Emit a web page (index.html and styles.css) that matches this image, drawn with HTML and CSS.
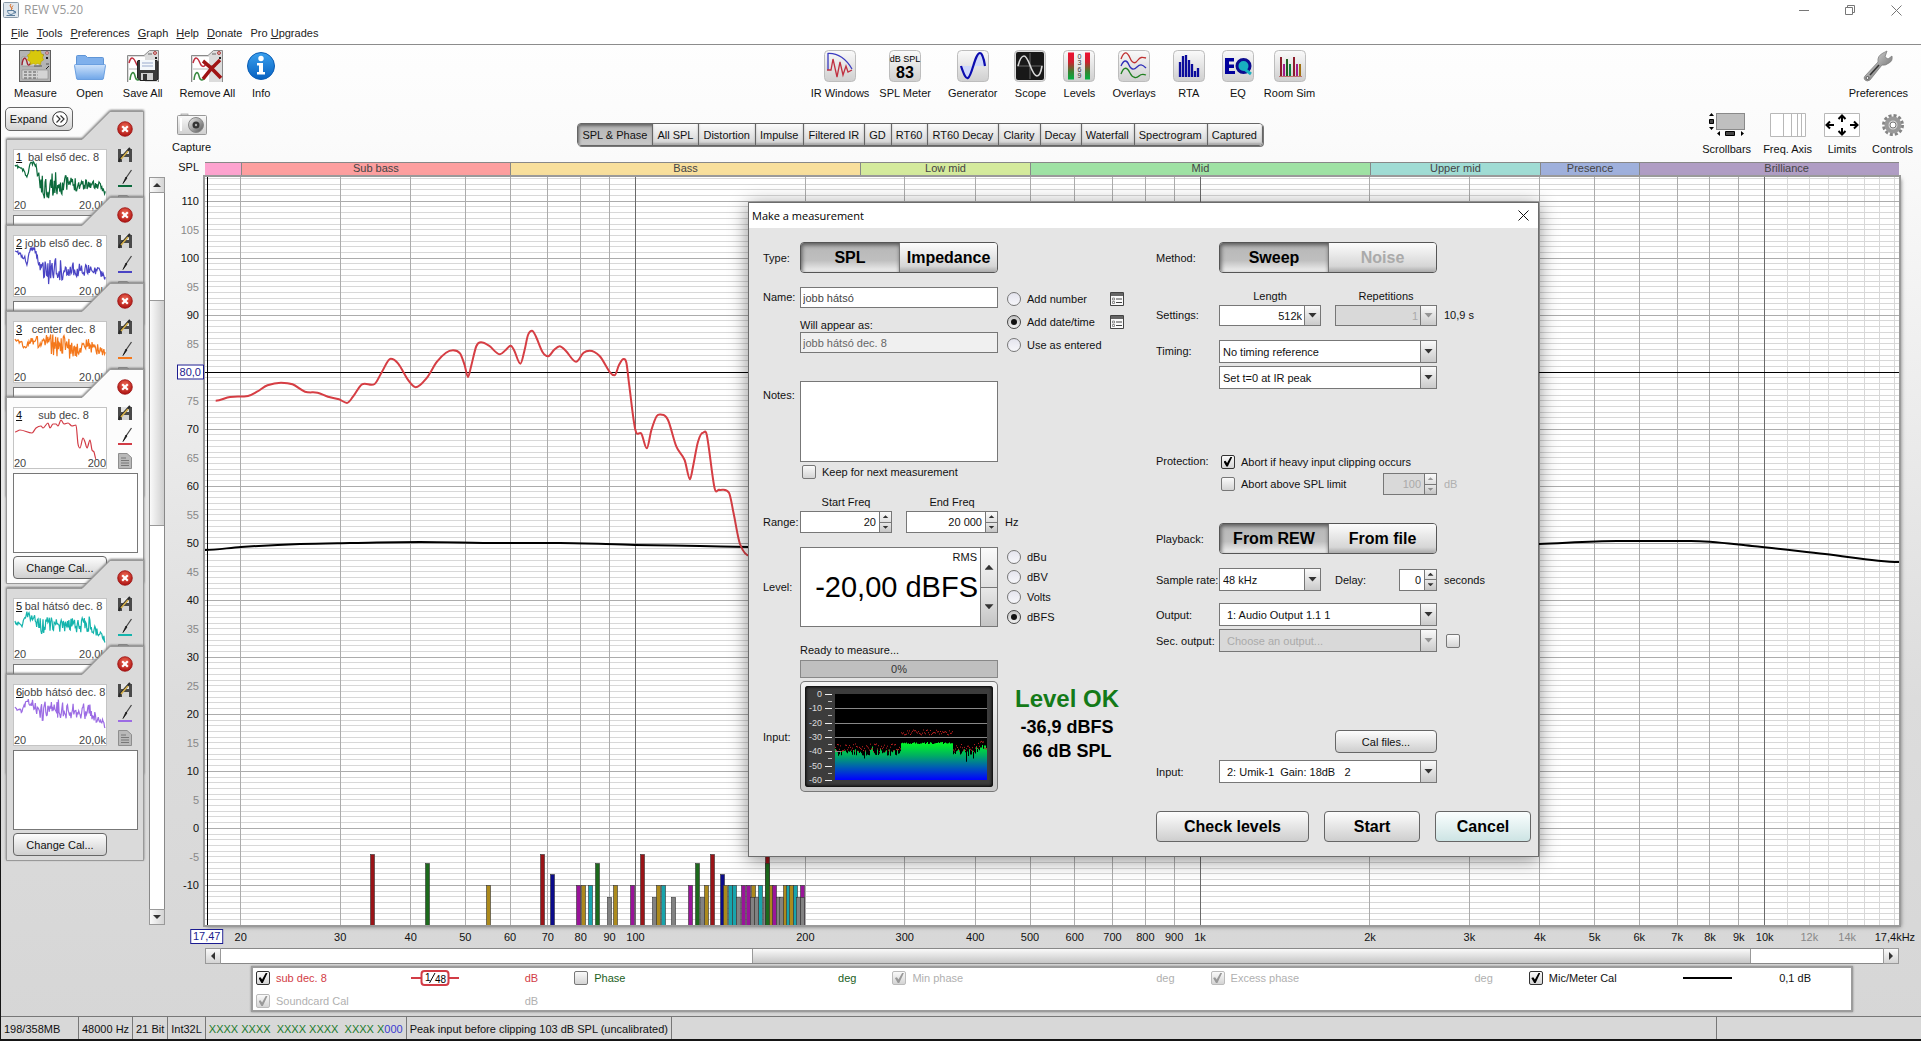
FILE: index.html
```html
<!DOCTYPE html>
<html lang="en">
<head>
<meta charset="utf-8">
<title>REW V5.20</title>
<meta name="viewport" content="width=device-width, initial-scale=1">
<link rel="stylesheet" href="styles.css">
</head>
<body>
<svg class="defs" aria-hidden="true">
  <defs>
    <linearGradient id="g-btn" x1="0" y1="0" x2="0" y2="1"><stop offset="0" stop-color="#fafafa"/><stop offset="1" stop-color="#cfcfcf"/></linearGradient>
    <linearGradient id="g-folder" x1="0" y1="0" x2="0" y2="1"><stop offset="0" stop-color="#cfe3fb"/><stop offset="1" stop-color="#6fa6e8"/></linearGradient>
    <linearGradient id="g-info" x1="0" y1="0" x2="0" y2="1"><stop offset="0" stop-color="#3aa0ee"/><stop offset="1" stop-color="#0660c0"/></linearGradient>
    <linearGradient id="g-level" x1="0" y1="0" x2="0" y2="1"><stop offset="0" stop-color="#ee1030"/><stop offset=".35" stop-color="#d02030"/><stop offset=".7" stop-color="#3c8030"/><stop offset="1" stop-color="#00b040"/></linearGradient>
    <linearGradient id="g-steel" x1="0" y1="0" x2="1" y2="1"><stop offset="0" stop-color="#eee"/><stop offset="1" stop-color="#555"/></linearGradient>
    <radialGradient id="g-red" cx=".5" cy=".35" r=".7"><stop offset="0" stop-color="#ee6a55"/><stop offset="1" stop-color="#a80c0c"/></radialGradient>
    <linearGradient id="g-spec" x1="0" y1="0" x2="0" y2="1"><stop offset="0" stop-color="#00ff20"/><stop offset=".35" stop-color="#00b060"/><stop offset=".65" stop-color="#0060b0"/><stop offset="1" stop-color="#0000ff"/></linearGradient>
    <symbol id="i-card" viewBox="0 0 32 32">
      <path d="M.5 32V5.500H17L22.500.5H31.500V32" fill="#dcdcdc" stroke="#8a8a8a"/>
      <rect x="2" y="7" width="16" height="11" fill="#fff"/><rect x="2" y="20" width="16" height="12" fill="#fff"/>
      <path d="M2 13C4 5 7 8 9 13s5 4 6 0" fill="none" stroke="#c03040" stroke-width="1.500"/>
      <path d="M3 30c1-9 4-9 5-4s4 5 5 2" fill="none" stroke="#3a8a40" stroke-width="1.500"/>
      <path d="M21 4h4M26 12h3M20 16h5" stroke="#666"/><circle cx="28" cy="3" r="1.500" fill="#e9b0b0" stroke="#a44"/><path d="M28 7l2 2m0-2l-2 2" stroke="#222"/>
    </symbol>
    <symbol id="i-measure" viewBox="0 0 32 32">
      <rect x=".5" y=".5" width="31" height="31" fill="#b4b4b4" stroke="#5d5d5d"/>
      <path d="M3 7h18v9H3zM3 20h26v9H3z" fill="#d4d4d4" stroke="#888" stroke-width=".6"/>
      <path d="M3 15c1-9 4-8 5-3s3 3 4 0" fill="none" stroke="#a02030" stroke-width="1.300"/>
      <path d="M5 22h14M5 25h14M5 28h14" stroke="#555" stroke-dasharray="3 1.500"/><path d="M15 16h8M22 5h3M27 14h3" stroke="#555"/>
      <circle cx="28" cy="3" r="1.500" fill="#eaa" stroke="#844" stroke-width=".6"/><path d="M27 7l2 2m0-2l-2 2M27 19l3-3" stroke="#222"/>
      <path d="M16.500 0l2 1.500 3-1 .5 3 2.500 1.500-1 2.500 1 2.500-2.500 1.500-.5 3-3-1-2 1-2-1-3 1-.5-3-2.500-1.500 1-2.500-1-2.500 2.500-1.500.5-3 3 1z" fill="#d8c80c" stroke="#b8a400" stroke-width=".6"/>
    </symbol>
    <symbol id="i-open" viewBox="0 0 32 32">
      <path d="M2.500 15V6.500q0-1 1-1h8l2 2h15q1 0 1 1V15z" fill="#7fb0ec" stroke="#5f95d6"/>
      <path d="M.5 15.500q0-1 1-1h29q1 0 1 1L29.500 28q0 1.500-1.500 1.500H4q-1.500 0-1.500-1.500z" fill="url(#g-folder)" stroke="#6a9fe0"/>
    </symbol>
    <symbol id="i-saveall" viewBox="0 0 32 32">
      <use href="#i-card"/>
      <path d="M11 10.500h19l1 1V29l-1.500 1.500H13L10.500 28V11z" fill="#3a3a3a" stroke="#222"/>
      <rect x="13" y="10" width="15" height="10" fill="#f4f8fb"/><path d="M15 13h11M15 16h11" stroke="#9ac" />
      <rect x="14" y="23" width="12" height="7" fill="#cfcfcf"/><rect x="16" y="24" width="4" height="6" fill="#333"/>
    </symbol>
    <symbol id="i-removeall" viewBox="0 0 32 32">
      <use href="#i-card"/>
      <path d="M12 11q9 7 18 17M29 10Q20 18 12 29" fill="none" stroke="#a01414" stroke-width="3.500"/>
    </symbol>
    <symbol id="i-info" viewBox="0 0 32 32">
      <circle cx="16" cy="16" r="13.500" fill="url(#g-info)" stroke="#0a5cb4"/>
      <circle cx="16" cy="8.500" r="2.700" fill="#fff"/><path d="M12 13h6v9h2v2.500h-8V22h2v-6.500h-2z" fill="#fff"/>
    </symbol>
    <symbol id="i-frame" viewBox="0 0 32 32"><rect x=".5" y=".5" width="31" height="31" rx="4" fill="url(#g-btn)" stroke="#bdbdbd"/></symbol>
    <symbol id="i-ir" viewBox="0 0 32 32"><use href="#i-frame"/>
      <path d="M4 20V3.500C14 3 22 9 28 19" fill="none" stroke="#3a3ac0" stroke-width="1.300"/>
      <path d="M3 20h4L9 9l4 18 3-15 3 13 3-9 2 6 4-2" fill="none" stroke="#c03040" stroke-width="1.300"/></symbol>
    <symbol id="i-gen" viewBox="0 0 32 32"><use href="#i-frame"/>
      <path d="M4 16h14V16C15 25 12 29 10 28S6 22 4 16zM16 16q6-14 8-12t4 12z" fill="#cfd8fa"/>
      <path d="M4 16c3 9 5 13 7 12 4-2 7-25 12-25 2 0 4 6 5 13" fill="none" stroke="#0c0cae" stroke-width="2.200"/></symbol>
    <symbol id="i-scope" viewBox="0 0 32 32"><rect x=".5" y=".5" width="31" height="31" rx="4" fill="#ddd" stroke="#bdbdbd"/>
      <rect x="2" y="2" width="28" height="28" rx="2" fill="#181818"/><path d="M16 3v26M3 16h26" stroke="#666"/>
      <path d="M4 16C6 8 8 6 10 6c5 0 7 19 13 20 2 0 4-4 5-10" fill="none" stroke="#d8d8d8" stroke-width="1.600"/></symbol>
    <symbol id="i-levels" viewBox="0 0 32 32"><use href="#i-frame"/>
      <rect x="5" y="2.500" width="6" height="27" fill="url(#g-level)"/><rect x="22" y="2.500" width="5" height="27" fill="url(#g-level)"/>
      <g font-family="Liberation Sans" font-size="7" text-anchor="middle" fill="#333"><text x="16.500" y="9">0</text><text x="16.500" y="15">3</text><text x="16.500" y="22">6</text><text x="16.500" y="28">9</text></g></symbol>
    <symbol id="i-overlays" viewBox="0 0 32 32"><use href="#i-frame"/>
      <g fill="none" stroke-width="1.300"><path d="M3 9c3-8 6-8 9-1s6 5 8 2 4-3 8-2" stroke="#c03030"/><path d="M3 16c3-7 6-6 8-1s5 5 8 2 5-3 9 1" stroke="#3030b8"/><path d="M3 24c3-8 6-7 9-1s7 5 9 3 4-2 7-1" stroke="#208020"/></g></symbol>
    <symbol id="i-rta" viewBox="0 0 32 32"><use href="#i-frame"/>
      <path d="M7 27V12M10 27V6M13 27V5M16 27V10M19 27V14M22 27V21M25 27V18" stroke="#0c0c9c" stroke-width="2.300"/></symbol>
    <symbol id="i-eq" viewBox="0 0 32 32"><use href="#i-frame"/>
      <path d="M3 8h9v3.500H7v3h5v3.500H7v3h6V24H3z" fill="#00009c"/><circle cx="21.500" cy="16" r="6.500" fill="#18b0c0" stroke="#0c0c90" stroke-width="3"/><path d="M21 18l8 6" stroke="#18b0c0" stroke-width="3"/></symbol>
    <symbol id="i-room" viewBox="0 0 32 32"><use href="#i-frame"/>
      <g stroke-width="2"><path d="M7 26V7M20 26V7" stroke="#8c1c2c"/><path d="M10 26V14M23 26V14" stroke="#a01c8c"/><path d="M13 26V9" stroke="#206020"/><path d="M16 26V14" stroke="#0c8040"/><path d="M26 26V14" stroke="#a07010"/></g><path d="M5 26.500h23" stroke="#c07070"/></symbol>
    <symbol id="i-wrench" viewBox="0 0 32 32">
      <path d="M3 26L16 12q-1-6 5-9 4-2 4-2l-2 6 3 2 4-3q1 5-3 7-4 3-7 2L8 30q-3 2-5 0t0-4z" fill="url(#g-steel)" stroke="#777" stroke-width=".7"/><circle cx="5.500" cy="28" r="1.500" fill="#eee" stroke="#555"/><path d="M8 25l9-10" stroke="#333" stroke-width="1.500"/></symbol>
    <symbol id="i-camera" viewBox="0 0 32 24">
      <rect x="5" y="1" width="7" height="4" fill="#ddd" stroke="#999" stroke-width=".7"/><rect x="1.500" y="2.500" width="29" height="19" rx="1" fill="url(#g-btn)" stroke="#999"/>
      <circle cx="20" cy="12" r="7.500" fill="url(#g-steel)" stroke="#888"/><circle cx="20" cy="12" r="3.500" fill="#333"/><circle cx="20" cy="12" r="1.200" fill="#aaa"/><path d="M5 5v13" stroke="#fff" stroke-width="2"/></symbol>
    <symbol id="i-scrollbars" viewBox="0 0 36 24"><rect x="7.500" y=".5" width="28" height="16" fill="#bfbfbf" stroke="#8a8a8a"/>
      <path d="M0 3l2.500-3L5 3zM0 14l2.500 3L5 14zM11 18v5l-3-2.500zM32 18v5l3-2.500z"/><path d="M.5 6.500h4v4h-4zM16.500 18.500h9v4h-9z" fill="#444" stroke="#000"/></symbol>
    <symbol id="i-freq" viewBox="0 0 36 24"><path d="M.5.5h35v23H.5zM13.500 1v22M21.500 1v22M27.500 1v22M31.500 1v22" fill="#fff" stroke="#b8b8b8"/></symbol>
    <symbol id="i-limits" viewBox="0 0 36 24"><path d="M.5.5h35v23H.5z" fill="#fff" stroke="#b8b8b8"/>
      <path d="M10 12H3m3-3.500L2.500 12 6 15.500M26 12h7m-3-3.500l3.500 3.500-3.500 3.500M18 9V3m-3.500 3L18 2.500 21.500 6M18 15v6m-3.500-3l3.500 3.500 3.500-3.500" fill="none" stroke="#000" stroke-width="2"/></symbol>
    <symbol id="i-gear" viewBox="0 0 36 24"><circle cx="18" cy="12" r="9.500" fill="none" stroke="#858585" stroke-width="3" stroke-dasharray="3 2"/><circle cx="18" cy="12" r="6.500" fill="#d4d4d4" stroke="#999" stroke-width="4"/><circle cx="18" cy="12" r="3" fill="#fff" stroke="#777"/></symbol>
    <symbol id="i-close" viewBox="0 0 16 16"><circle cx="8" cy="8" r="7.300" fill="url(#g-red)" stroke="#9c1010" stroke-width=".8"/><path d="M5.200 5.200l5.600 5.600M10.800 5.200l-5.600 5.600" stroke="#fff" stroke-width="2.200"/></symbol>
    <symbol id="i-save" viewBox="0 0 16 16"><path d="M1 2h14v13H1z" fill="#4a4a4a"/><path d="M4 2h8v5H4z" fill="#e4e4e4"/><path d="M5 10h7v5H5z" fill="#d4d4d4"/><path d="M13 1L3 12l-1 3" fill="none" stroke="#2a2a2a" stroke-width="2"/><path d="M11 4L4 12" stroke="#d8b24a" stroke-width="1.500"/></symbol>
    <symbol id="i-brush" viewBox="0 0 16 20"><path d="M14.500 1L9 9" stroke="#444" stroke-width="1.300"/><path d="M9 8l1 1-4 5.500z" fill="#111" stroke="#111" stroke-width=".8"/></symbol>
    <symbol id="i-note" viewBox="0 0 14 16"><path d="M.5.500h8.500l4.500 4v11H.5z" fill="#b9b9b9" stroke="#8e8e8e"/><path d="M3 5h5M3 7.500h8M3 10h8M3 12.500h8" stroke="#777"/></symbol>
    <symbol id="i-list" viewBox="0 0 14 14"><path d="M.5.5h13v13H.5z" fill="#fafafa" stroke="#444"/><path d="M1 1h12v3H1z" fill="#666"/><path d="M6 7h6M6 10.500h6" stroke="#444"/><path d="M2.500 6h2v2h-2zM2.500 9.500h2v2h-2z" fill="none" stroke="#777" stroke-width=".8"/></symbol>
    <symbol id="i-java" viewBox="0 0 16 16"><rect x=".5" y=".5" width="15" height="15" rx="1" fill="#dfe7ee" stroke="#8a9aa8"/><path d="M8 2q-2 2 0 3.500T8 8M10 3.500Q8 5 9 7" fill="none" stroke="#d8702c"/><path d="M4.500 8.500h6.500v2q-1 2-3 2t-3-2zM11 9.500h1.500v1.500H11M3.500 13.500h8.500" fill="none" stroke="#5a7d9c"/></symbol>
  </defs>
</svg>

<div class="app">
  <header class="titlebar">
    <svg class="java" width="16" height="16"><use href="#i-java"/></svg>
    <span class="titlebar-text">REW V5.20</span>
    <div class="win-buttons">
      <button type="button" aria-label="Minimise"><svg width="11" height="11"><path d="M0 5.500h10" stroke="#777"/></svg></button>
      <button type="button" aria-label="Restore"><svg width="11" height="11"><path d="M.5 2.500h7v7h-7zM2.500 2V.5h7v7H8" fill="none" stroke="#777"/></svg></button>
      <button type="button" aria-label="Close"><svg width="11" height="11"><path d="M.5.5l10 10M10.500.5l-10 10" stroke="#777"/></svg></button>
    </div>
  </header>
  <nav class="menubar">
    <a href="#file"><u>F</u>ile</a><a href="#tools"><u>T</u>ools</a><a href="#preferences"><u>P</u>references</a><a href="#graph"><u>G</u>raph</a><a href="#help"><u>H</u>elp</a><a href="#donate"><u>D</u>onate</a><a href="#pro">Pro <u>U</u>pgrades</a>
  </nav>

  <div class="toolbar">
    <div class="tool-group">
      <button class="tool" type="button"><svg width="32" height="32"><use href="#i-measure"/></svg>Measure</button>
      <button class="tool" type="button"><svg width="32" height="32"><use href="#i-open"/></svg>Open</button>
      <button class="tool" type="button"><svg width="32" height="32"><use href="#i-saveall"/></svg>Save All</button>
      <div class="tool-pair">
        <button class="tool" type="button"><svg width="32" height="32"><use href="#i-removeall"/></svg>Remove All</button>
        <button class="tool" type="button"><svg width="32" height="32"><use href="#i-info"/></svg>Info</button>
      </div>
    </div>
    <div class="tool-group">
      <div class="tool-pair">
        <button class="tool" type="button"><svg width="32" height="32"><use href="#i-ir"/></svg>IR Windows</button>
        <button class="tool" type="button"><svg width="32" height="32"><use href="#i-frame"/><text class="spl-small" x="16" y="12">dB SPL</text><text class="spl-big" x="16" y="28">83</text></svg>SPL Meter</button>
      </div>
      <button class="tool" type="button"><svg width="32" height="32"><use href="#i-gen"/></svg>Generator</button>
      <button class="tool" type="button"><svg width="32" height="32"><use href="#i-scope"/></svg>Scope</button>
      <button class="tool" type="button"><svg width="32" height="32"><use href="#i-levels"/></svg>Levels</button>
      <button class="tool" type="button"><svg width="32" height="32"><use href="#i-overlays"/></svg>Overlays</button>
      <button class="tool" type="button"><svg width="32" height="32"><use href="#i-rta"/></svg>RTA</button>
      <div class="tool-pair">
        <button class="tool" type="button"><svg width="32" height="32"><use href="#i-eq"/></svg>EQ</button>
        <button class="tool" type="button"><svg width="32" height="32"><use href="#i-room"/></svg>Room Sim</button>
      </div>
    </div>
    <div class="tool-group">
      <button class="tool" type="button"><svg width="32" height="32"><use href="#i-wrench"/></svg>Preferences</button>
    </div>
  </div>

  <main class="main">
    <aside class="side">
      <div class="side-list">
        <button class="expand" type="button">Expand <svg width="16" height="16"><circle cx="8" cy="8" r="7.300" fill="#fff" stroke="#333"/><path d="M4.500 4.500L8 8l-3.500 3.500M8.500 4.500L12 8l-3.500 3.500" fill="none" stroke="#333" stroke-width="1.200"/></svg></button>
        <div class="cards" id="cards"></div>
      </div>
      <div class="vscroll">
        <button type="button" aria-label="Scroll up"><i class="tri up"></i></button>
        <div class="vtrack"><div class="vthumb"></div></div>
        <button type="button" aria-label="Scroll down"><i class="tri down"></i></button>
      </div>
    </aside>

    <section class="graph">
      <div class="graph-head">
        <button class="tool capture" type="button"><svg width="32" height="24"><use href="#i-camera"/></svg>Capture</button>
        <div class="tabs">
          <button class="on" type="button">SPL &amp; Phase</button><button type="button">All SPL</button><button type="button">Distortion</button><button type="button">Impulse</button><button type="button">Filtered IR</button><button type="button">GD</button><button type="button">RT60</button><button type="button">RT60 Decay</button><button type="button">Clarity</button><button type="button">Decay</button><button type="button">Waterfall</button><button type="button">Spectrogram</button><button type="button">Captured</button>
        </div>
        <div class="graph-tools">
          <button class="tool" type="button"><svg width="36" height="24"><use href="#i-scrollbars"/></svg>Scrollbars</button>
          <button class="tool" type="button"><svg width="36" height="24"><use href="#i-freq"/></svg>Freq. Axis</button>
          <button class="tool" type="button"><svg width="36" height="24"><use href="#i-limits"/></svg>Limits</button>
          <button class="tool" type="button"><svg width="36" height="24"><use href="#i-gear"/></svg>Controls</button>
        </div>
      </div>
      <div class="chart">
        <span class="y-title">SPL</span>
        <div class="bands" id="bands"></div>
        <div class="y-axis" id="y-axis"></div>
        <div class="plot">
          <svg id="plot" viewBox="0 0 1694 748" preserveAspectRatio="none" role="img" aria-label="SPL and phase graph"></svg>
        </div>
        <div class="x-axis" id="x-axis"></div>
        <div class="hscroll">
          <button type="button" aria-label="Scroll left"><i class="tri left"></i></button>
          <div class="htrack"><div class="hthumb"></div></div>
          <button type="button" aria-label="Scroll right"><i class="tri right"></i></button>
        </div>
      </div>
      <div class="legend">
        <div class="leg red"><label><input type="checkbox" checked>sub dec. 8</label>
          <svg class="smooth" width="48" height="16"><path d="M0 8h48" stroke="#d23c46" stroke-width="2"/><rect x="10.500" y="1" width="27" height="14" rx="3" fill="#fff" stroke="#d23c46" stroke-width="2"/><text x="14" y="11">1</text><path d="M18.500 13L24 3" stroke="#000"/><text x="24" y="13">48</text></svg>
          <span class="unit">dB</span></div>
        <div class="leg green"><label><input type="checkbox">Phase</label><span class="unit">deg</span></div>
        <div class="leg off"><label><input type="checkbox" checked disabled>Min phase</label><span class="unit">deg</span></div>
        <div class="leg off"><label><input type="checkbox" checked disabled>Excess phase</label><span class="unit">deg</span></div>
        <div class="leg"><label><input type="checkbox" checked>Mic/Meter Cal</label><i class="swatch"></i><span class="unit">0,1 dB</span></div>
        <div class="leg off"><label><input type="checkbox" checked disabled>Soundcard Cal</label><span class="unit">dB</span></div>
      </div>
    </section>
  </main>

  <footer class="status">
    <span class="st-mem">198/358MB</span><span>48000 Hz</span><span>21 Bit</span><span>Int32L</span><span class="bits">XXXX XXXX  XXXX XXXX  XXXX X<b>000</b></span><span>Peak input before clipping 103 dB SPL (uncalibrated)</span><span class="st-fill"></span><span class="st-end"></span>
  </footer>
</div>

<div class="dialog" role="dialog" aria-labelledby="dlg-title">
  <div class="dlg-bar"><span id="dlg-title">Make a measurement</span>
    <button type="button" aria-label="Close"><svg width="11" height="11"><path d="M.5.5l10 10M10.500.5l-10 10" stroke="#111"/></svg></button></div>
  <form class="dlg-body">
    <div class="left">
      <div class="row">
        <span class="lab">Type:</span>
        <div class="seg"><button class="on" type="button">SPL</button><button type="button">Impedance</button></div>
      </div>
      <div class="row top mt14">
        <label class="lab line21" for="name">Name:</label>
        <div class="stack">
          <input class="text" id="name" type="text" value="jobb hátsó">
          <label class="caption" for="appear">Will appear as:</label>
          <input class="text ro" id="appear" type="text" value="jobb hátsó dec. 8" readonly>
        </div>
        <div class="radios wide">
          <div class="opt"><label><input type="radio" name="add">Add number</label><svg width="14" height="14"><use href="#i-list"/></svg></div>
          <div class="opt"><label><input type="radio" name="add" checked>Add date/time</label><svg width="14" height="14"><use href="#i-list"/></svg></div>
          <div class="opt"><label><input type="radio" name="add">Use as entered</label></div>
        </div>
      </div>
      <div class="row top mt28">
        <label class="lab drop" for="notes">Notes:</label>
        <div class="stack"><textarea id="notes"></textarea>
          <label class="check"><input type="checkbox">Keep for next measurement</label></div>
      </div>
      <div class="row bottom mt16">
        <span class="lab line22">Range:</span>
        <div class="pair">
          <div class="field"><label for="f1">Start Freq</label><div class="spin"><input id="f1" type="text" value="20"><span><button type="button" aria-label="Up"><i class="tri up"></i></button><button type="button" aria-label="Down"><i class="tri down"></i></button></span></div></div>
          <div class="field"><label for="f2">End Freq</label><div class="spin"><input id="f2" type="text" value="20 000"><span><button type="button" aria-label="Up"><i class="tri up"></i></button><button type="button" aria-label="Down"><i class="tri down"></i></button></span></div></div>
        </div>
        <span class="line22">Hz</span>
      </div>
      <div class="row mt14">
        <label class="lab" for="level">Level:</label>
        <div class="spin big"><div class="level"><span>RMS</span><input id="level" type="text" value="-20,00 dBFS"></div><span><button type="button" aria-label="Up"><i class="tri up"></i></button><button type="button" aria-label="Down"><i class="tri down"></i></button></span></div>
        <div class="radios">
          <label><input type="radio" name="unit">dBu</label>
          <label><input type="radio" name="unit">dBV</label>
          <label><input type="radio" name="unit">Volts</label>
          <label><input type="radio" name="unit" checked>dBFS</label>
        </div>
      </div>
      <div class="row mt16">
        <div class="stack second"><span class="ready">Ready to measure...</span><div class="progress">0%</div></div>
      </div>
      <div class="row mt3">
        <span class="lab">Input:</span>
        <div class="meter"><svg id="meter" width="188" height="101" role="img" aria-label="Input spectrum"></svg></div>
        <div class="result"><strong>Level OK</strong><b>-36,9 dBFS</b><b>66 dB SPL</b></div>
      </div>
    </div>

    <div class="right">
      <div class="row">
        <span class="lab">Method:</span>
        <div class="seg"><button class="on" type="button">Sweep</button><button type="button" disabled>Noise</button></div>
      </div>
      <div class="row bottom mt16">
        <span class="lab line21">Settings:</span>
        <div class="pair">
          <div class="field"><label for="len">Length</label><div class="combo low end"><select id="len"><option>512k</option></select></div></div>
          <div class="field"><label for="rep">Repetitions</label><div class="combo low end dis"><select id="rep" disabled><option>1</option></select></div></div>
        </div>
        <span class="line21">10,9 s</span>
      </div>
      <div class="row top mt14">
        <span class="lab line23">Timing:</span>
        <div class="stack gap3">
          <div class="combo"><select aria-label="Timing reference"><option>No timing reference</option></select></div>
          <div class="combo"><select aria-label="Time zero"><option>Set t=0 at IR peak</option></select></div>
        </div>
      </div>
      <div class="row top mt65">
        <span class="lab">Protection:</span>
        <label class="check"><input type="checkbox" checked>Abort if heavy input clipping occurs</label>
      </div>
      <div class="row mt4">
        <div class="split second"><label class="check"><input type="checkbox">Abort above SPL limit</label>
          <div class="spin w54 dis"><input type="text" value="100" aria-label="SPL limit" disabled><span><button type="button" aria-label="Up" disabled><i class="tri up"></i></button><button type="button" aria-label="Down" disabled><i class="tri down"></i></button></span></div></div>
        <span class="dim">dB</span>
      </div>
      <div class="row mt28">
        <span class="lab">Playback:</span>
        <div class="seg"><button class="on" type="button">From REW</button><button type="button">From file</button></div>
      </div>
      <div class="row mt14">
        <label class="lab" for="rate">Sample rate:</label>
        <div class="pair"><div class="combo"><select id="rate"><option>48 kHz</option></select></div>
          <div class="split"><label for="delay">Delay:</label><div class="spin w38"><input id="delay" type="text" value="0"><span><button type="button" aria-label="Up"><i class="tri up"></i></button><button type="button" aria-label="Down"><i class="tri down"></i></button></span></div></div></div>
        <span>seconds</span>
      </div>
      <div class="row mt12">
        <label class="lab" for="out">Output:</label>
        <div class="combo in"><select id="out"><option>1: Audio Output 1.1 1</option></select></div>
      </div>
      <div class="row mt3">
        <label class="lab" for="sec">Sec. output:</label>
        <div class="combo in dis"><select id="sec" disabled><option>Choose an output...</option></select></div>
        <label class="check"><input type="checkbox" aria-label="Use secondary output"></label>
      </div>
      <div class="row mt78"><div class="pair second"><span></span><button class="btn" type="button">Cal files...</button></div></div>
      <div class="row mt7">
        <label class="lab" for="inp">Input:</label>
        <div class="combo in"><select id="inp"><option>2: Umik-1&nbsp; Gain: 18dB&nbsp;&nbsp; 2</option></select></div>
      </div>
      <div class="actions mt28">
        <button class="btn strong wide" type="button">Check levels</button><button class="btn strong" type="button">Start</button><button class="btn strong cyan" type="button">Cancel</button>
      </div>
    </div>
  </form>
</div>
<script src="script.js"></script>
</body>
</html>
```
FILE: styles.css
```css
* { box-sizing: border-box; }
html, body { height: 100%; }
body { margin: 0; font: 11px/14px "Liberation Sans", Arial, sans-serif; color: #111; background: #151515; }
button, input, select, textarea { font: inherit; color: inherit; margin: 0; }
button { padding: 0; border: 0; background: none; }
svg { display: block; overflow: visible; flex: none; }
.defs { position: absolute; width: 0; height: 0; }

.app { display: flex; flex-direction: column; height: calc(100vh - 2px); min-height: 900px; margin-left: 1px; background: linear-gradient(#fff 0, #fbfbfb 140px, #dcdcdc 700px, #d6d6d6 100%); }
.titlebar { display: flex; align-items: center; height: 20px; padding: 0 19px 0 2px; background: #fff; font: 12px/16px "Open Sans", "Noto Sans", sans-serif; color: #999; }
.titlebar-text { margin-left: 5px; }
.win-buttons { display: flex; gap: 35px; margin-left: auto; }
.menubar { display: flex; gap: 8px; height: 25px; padding: 6px 10px 0; background: #fff; border-bottom: 1px solid #8c8c8c; }
.menubar a { color: #222; text-decoration: none; }

.toolbar { display: flex; justify-content: space-between; height: 59px; padding: 5px 13px 0; }
.tool-group { display: flex; gap: 17px; align-items: flex-start; }
.tool-pair { display: flex; gap: 10px; }
.tool { display: flex; flex-direction: column; align-items: center; gap: 4px; white-space: nowrap; }
.spl-small { font-size: 9px; text-anchor: middle; }
.spl-big { font-size: 16px; font-weight: bold; text-anchor: middle; }

.main { display: flex; flex: 1; min-height: 0; }
.side { display: flex; width: 165px; flex: none; padding: 3px 1px 0 4px; gap: 5px; }
.side-list { width: 139px; }
.expand { position: relative; z-index: 1; display: flex; align-items: center; justify-content: center; gap: 5px; width: 68px; height: 24px; border: 1px solid #666; border-radius: 5px; background: linear-gradient(#fdfdfd, #d4d4d4); }
.cards { margin-top: -20px; padding-left: 1px; }
.card { position: relative; height: 215px; margin-bottom: -129px; --fill: #dadada; }
.card.open { margin-bottom: -24px; --fill: #fcfcfc; }
.card:last-child { margin-bottom: 0; --fill: #dadada; }
.card-shape { position: absolute; inset: 0; filter: drop-shadow(0 -1px 1px #777); }
.card-shape path { fill: var(--fill); stroke: #999; }
.card-in { position: relative; display: grid; grid-template-columns: 94px 16px; column-gap: 10px; padding: 10px 0 0 7px; }
.thumb { align-self: start; position: relative; margin-top: 28px; height: 62px; border: 1px solid #c4c4c4; background: #fff; color: #444; }
.thumb svg { position: absolute; inset: 0; }
.thumb-top, .thumb-bot { position: relative; display: flex; padding: 0 1px 0 2px; white-space: nowrap; }
.thumb-top u { color: #111; }
.thumb-top span { flex: 1; text-align: center; margin: 0 -2px; }
.thumb-bot { justify-content: space-between; margin-top: 34px; padding: 0; }
.card-icons { display: flex; flex-direction: column; align-items: center; gap: 10px; }
.card-icons .paint { margin: -4px 0; }
.memo { width: 125px; height: 80px; margin: 4px 0 3px 7px; border: 1px solid #777; background: #fff; resize: none; display: block; position: relative; }
.calbtn { position: relative; display: block; width: 94px; height: 23px; margin-left: 7px; border: 1px solid #666; border-radius: 4px; background: linear-gradient(#fdfdfd, #d0d0d0); }

.vscroll { display: flex; flex-direction: column; width: 16px; margin: 70px 0 91px; border: 1px solid #888; background: #fff; }
.vscroll button, .hscroll button { display: grid; place-items: center; flex: none; width: 14px; height: 14px; background: linear-gradient(90deg, #fafafa, #d4d4d4); box-shadow: 0 0 0 1px #999; }
.vtrack { flex: 1; display: flex; flex-direction: column; padding-top: 108px; }
.vthumb { height: 37%; border: 1px solid #999; border-width: 1px 0; background: linear-gradient(90deg, #fafafa, #cfcfcf); }
.tri { display: block; width: 8px; height: 4px; background: #333; }
.tri.up { clip-path: polygon(50% 0, 100% 100%, 0 100%); }
.tri.down { clip-path: polygon(0 0, 100% 0, 50% 100%); }
.tri.left { width: 4px; height: 8px; clip-path: polygon(100% 0, 100% 100%, 0 50%); }
.tri.right { width: 4px; height: 8px; clip-path: polygon(0 0, 100% 50%, 0 100%); }

.graph { flex: 1; min-width: 0; display: flex; flex-direction: column; }
.graph-head { display: flex; justify-content: space-between; height: 58px; padding: 9px 8px 0 6px; }
.capture { gap: 3px; align-self: flex-start; }
.graph-tools { display: flex; gap: 12px; }
.graph-tools .tool { gap: 5px; align-self: flex-start; }
.tabs { display: flex; height: 23px; margin: 10px 73px 0 0; border: 1px solid #666; border-radius: 4px; box-shadow: 1px 1px 0 #777; overflow: hidden; }
.tabs button { padding: 0 5px 0 4px; white-space: nowrap; background: linear-gradient(#fbfbfb, #d2d2d2); box-shadow: inset 0 -2px 2px #aaa; }
.tabs button + button { border-left: 1px solid #666; }
.tabs .on { background: linear-gradient(#b4b4b4, #c8c8c8); box-shadow: inset 1px 2px 3px #666; }

.chart { flex: 1; min-height: 0; display: grid; grid-template-columns: 39px minmax(0, 1fr) 22px; grid-template-rows: 12px minmax(0, 1fr) 23px 16px; }
.y-title { text-align: right; padding-right: 6px; line-height: 10px; }
.bands { display: flex; border-top: 1px solid #888; }
.bands span { flex-basis: 0; text-align: center; line-height: 11px; color: #444; height: 12px; }
.bands span + span { border-left: 1px solid #888; }
.bands span:last-child { padding-left: 34px; }
.y-axis { grid-column: 1; grid-row: 2; position: relative; margin-top: 3px; }
.y-axis span { position: absolute; right: 6px; transform: translateY(-50%); }
.y-axis .minor, .x-axis .minor { color: #888; }
.y-axis .mark, .x-axis .mark { border: 1px solid #1c1c90; background: #fff; color: #1c1c90; padding: 0 2px; line-height: 13px; z-index: 1; }
.y-axis .mark { right: 1px; }
.plot { grid-column: 2; grid-row: 2; margin-top: 3px; background: #fff; box-shadow: 0 0 0 2px #9a9a9a, 2px 2px 4px #777; min-height: 0; }
.plot svg { width: 100%; height: 100%; overflow: hidden; }
.plot path { fill: none; vector-effect: non-scaling-stroke; }
.plot .grid { shape-rendering: crispEdges; }
.g-minor { stroke: #d8d8d8; }
.g-major { stroke: #acacac; }
.g-decade { stroke: #6a6a6a; }
.g-cursor { stroke: #000; }
.plot .trace { stroke: #d63e44; stroke-width: 2; }
.plot .cal { stroke: #000; stroke-width: 2; }
.x-axis { grid-column: 2; position: relative; }
.x-axis span { position: absolute; top: 5px; transform: translateX(-50%); white-space: nowrap; }
.x-axis .mark { top: 4px; }
.hscroll { grid-column: 2; display: flex; border: 1px solid #888; background: #fff; }
.hscroll button { background: linear-gradient(#fafafa, #d4d4d4); }
.htrack { flex: 1; display: flex; }
.htrack::before { content: ""; width: 32%; }
.hthumb { width: 60%; height: 14px; border: 1px solid #999; border-width: 0 1px; background: linear-gradient(#fafafa, #c6c6c6); }

.legend { display: grid; grid-template-columns: repeat(5, 1fr); grid-auto-rows: 23px; margin: 2px 68px 4px 85px; padding: 0 4px 0 3px; height: 46px; background: #fff; border: 2px solid #9c9c9c; box-shadow: 0 0 2px #888; }
.leg { position: relative; display: flex; align-items: center; justify-content: space-between; padding-right: 36px; height: 20px; white-space: nowrap; }
.leg label, .check { display: flex; align-items: center; gap: 6px; }
.leg.red { color: #d23c46; }
.leg.green { color: #1c601c; }
.leg.off { color: #b0b0b0; }
.smooth { margin-left: 18px; }
.smooth text { font-size: 10px; fill: #000; }
.swatch { width: 49px; height: 2px; background: #000; margin-left: 20px; }

input[type=checkbox] { appearance: none; flex: none; width: 14px; height: 14px; border: 1px solid #777; border-radius: 2px; background: linear-gradient(#fafafa, #d4d4d4); display: grid; place-items: center; }
input[type=checkbox]:checked { border-color: #333; }
input[type=checkbox]:checked::after { content: ""; width: 9px; height: 10px; background: #000; clip-path: polygon(0 50%, 22% 42%, 40% 66%, 80% 0, 100% 0, 48% 100%, 32% 100%); }
input[type=checkbox]:disabled { border-color: #bbb; }
input[type=checkbox]:disabled::after { background: #999; }
input[type=radio] { appearance: none; flex: none; width: 14px; height: 14px; border: 1px solid #777; border-radius: 50%; background: linear-gradient(#e4e4ee, #f6f6fa); display: grid; place-items: center; }
input[type=radio]:checked { background: linear-gradient(#c4c4c4, #f0f0f0); border-color: #444; }
input[type=radio]:checked::after { content: ""; width: 6px; height: 6px; border-radius: 50%; background: #111; }

.status { display: flex; height: 23px; line-height: 24px; border-top: 1px solid #777; background: #d8d8d8; white-space: pre; }
.status span { border-right: 1px solid #777; padding: 0 3px; }
.status .st-mem { width: 78px; }
.bits { color: #1a7a2a; }
.bits b { font-weight: normal; color: #3a3ad0; }
.status .st-fill { flex: 1; }
.status .st-end { width: 204px; border: 0; }

.dialog { position: absolute; left: 748px; top: 202px; width: 791px; border: 1px solid #6c6c6c; background: #e5e5e5; box-shadow: 0 3px 18px rgba(0, 0, 0, .45); }
.dlg-bar { display: flex; justify-content: space-between; align-items: center; height: 25px; padding: 0 9px 0 3px; background: #fff; font: 11px/16px "Open Sans", "Noto Sans", sans-serif; color: #000; }
.dlg-body { display: grid; grid-template-columns: 393px 1fr; padding: 14px 7px 14px 14px; }
.row { display: grid; grid-template-columns: 37px 198px auto; align-items: center; justify-content: start; white-space: nowrap; }
.right .row { grid-template-columns: 63px 218px auto; }
.row > :nth-child(3), .dim { margin-left: 7px; }
.left .row > .radios { margin-left: 9px; }
.row.top { align-items: start; }
.row.bottom { align-items: end; }
.second { grid-column: 2; }
.mt3 { margin-top: 3px; } .mt4 { margin-top: 4px; } .mt7 { margin-top: 7px; } .mt12 { margin-top: 12px; }
.mt14 { margin-top: 14px; } .mt16 { margin-top: 16px; } .mt28 { margin-top: 28px; }
.mt65 { margin-top: 65px; } .mt78 { margin-top: 78px; }
.line21 { line-height: 21px; } .line22 { line-height: 22px; } .line23 { line-height: 23px; }
.drop { padding-top: 7px; }
.stack { display: flex; flex-direction: column; }
.gap3 { gap: 3px; }

.seg { display: grid; grid-template-columns: 1fr 1fr; height: 31px; border: 1px solid #555; border-radius: 4px; overflow: hidden; font-size: 16px; font-weight: bold; background: #ddd; }
.seg button { color: #000; background: linear-gradient(#fcfcfc, #d6d6d6 80%, #aaa); border-left: 1px solid #777; }
.seg .on { border-left: 0; background: linear-gradient(#b6b6b6, #bfbfbf 60%, #f2f2f2); box-shadow: inset 1px 2px 4px #555; }
.seg button:disabled { color: #aaa; }
.text { width: 100%; height: 21px; padding: 0 2px; border: 1px solid #777; background: #fff; color: #444; }
.text.ro { background: #f0f0f0; color: #666; }
.caption { padding-top: 10px; }
.radios { display: flex; flex-direction: column; gap: 5px; }
.radios label { display: flex; align-items: center; gap: 6px; height: 15px; }
.radios.wide { gap: 8px; padding-top: 4px; width: 117px; }
.opt { display: flex; align-items: center; justify-content: space-between; height: 15px; }
textarea { display: block; width: 100%; height: 81px; border: 1px solid #777; background: #fff; resize: none; }
.check { padding-left: 2px; height: 15px; }
.stack .check { margin-top: 2px; }
.pair { display: grid; grid-template-columns: 1fr 1fr; gap: 14px; }
.field { display: flex; flex-direction: column; gap: 2px; text-align: center; }
.spin { display: flex; height: 22px; border: 1px solid #777; background: #fff; }
.spin input { flex: 1; min-width: 0; width: 0; border: 0; background: none; text-align: right; padding: 0 3px; }
.spin > span { display: flex; flex-direction: column; width: 12px; border-left: 1px solid #777; }
.spin button { flex: 1; display: grid; place-items: center; background: linear-gradient(#fafafa, #e0e0e0); }
.spin button + button { border-top: 1px solid #777; background: linear-gradient(#e8e8e8, #c4c4c4); }
.spin .tri { width: 6px; height: 3px; }
.spin.big { height: 80px; }
.spin.big > span { width: 17px; }
.spin.big .tri { width: 9px; height: 5px; }
.level { flex: 1; min-width: 0; display: flex; flex-direction: column; text-align: right; padding-top: 2px; }
.level span { padding-right: 3px; }
.level input { flex: none; width: 100%; padding-right: 2px; font-size: 29px; line-height: 46px; height: 46px; color: #000; }
.w54 { width: 54px; } .w38 { width: 38px; }
.dis { color: #aaa; background: #d9d9d9; }
.dis .tri, .dis.combo::after { opacity: .45; }
.dim { color: #b0b0b0; }
.split { display: flex; justify-content: space-between; align-items: center; }
.progress { height: 18px; margin-top: 3px; border: 1px solid #888; background: #bfbfbf; text-align: center; line-height: 16px; color: #333; }
.combo { display: flex; position: relative; height: 23px; border: 1px solid #777; background: linear-gradient(#777, #777) right 15px top / 1px 100% no-repeat, linear-gradient(#fafafa, #cacaca) right / 15px 100% no-repeat, #fff; }
.combo.dis { background-color: #d9d9d9; }
.combo.low { height: 21px; }
.combo::after { content: ""; position: absolute; right: 3px; top: 50%; width: 9px; height: 5px; margin-top: -3px; background: #333; clip-path: polygon(0 0, 100% 0, 50% 100%); pointer-events: none; }
.combo select { appearance: none; flex: 1; min-width: 0; border: 0; background: none; padding: 0 18px 0 3px; opacity: 1; }
.combo.in select { padding-left: 7px; }
.combo.end select { text-align-last: right; }
.meter { height: 111px; padding: 5px; border-radius: 5px; background: linear-gradient(#f4f4f4, #c8c8c8); box-shadow: inset 0 0 0 1px #777; }
.meter svg { background: #3c3c3c; border-radius: 3px; box-shadow: inset 0 0 3px 1px #000; }
.meter text { font-size: 9px; fill: #ddd; text-anchor: end; }
.result { align-self: start; width: 124px; padding-top: 4px; display: flex; flex-direction: column; align-items: center; font-size: 18px; line-height: 24px; color: #000; }
.result strong { font-size: 24px; line-height: 28px; margin-bottom: 2px; color: #147a18; }
.btn { height: 23px; border: 1px solid #666; border-radius: 4px; background: linear-gradient(#fdfdfd, #cecece); }
.actions { display: grid; grid-template-columns: 153px 96px 96px; gap: 15px; }
.strong { height: 31px; font-size: 16px; font-weight: bold; color: #000; }
.cyan { background: linear-gradient(#fafefe, #cde4e4); }
```
FILE: script.js
```js
const NS = 'http://www.w3.org/2000/svg';
const el = (parent, tag, attrs = {}, text) => {
  const n = document.createElementNS(NS, tag);
  for (const k in attrs) n.setAttribute(k, attrs[k]);
  if (text !== undefined) n.textContent = text;
  parent.append(n);
  return n;
};

// repeatable noise for the measured traces
const noise = seed => () => (seed = (seed * 16807) % 2147483647) / 2147483647;

// smooth line through a flat list of x, y values
const smooth = p => {
  const n = p.length / 2, X = i => p[2 * i], Y = i => p[2 * i + 1];
  let d = `M${X(0)} ${Y(0)}`;
  for (let i = 0; i < n - 1; i++) {
    const a = Math.max(i - 1, 0), b = Math.min(i + 2, n - 1), h = (X(i + 1) - X(i)) / 3;
    const flat = (l, m, r) => (Y(m) - Y(l)) * (Y(r) - Y(m)) <= 0 ? 0 : (Y(r) - Y(l)) / (X(r) - X(l));
    const s1 = flat(a, i, i + 1), s2 = flat(i, i + 1, b);
    d += `C${X(i) + h} ${Y(i) + s1 * h} ${X(i + 1) - h} ${Y(i + 1) - s2 * h} ${X(i + 1)} ${Y(i + 1)}`;
  }
  return d;
};

// axes: 17.3 Hz to 17.3 kHz across 1694 units, 5.7 units per dB over 748 units
const W = 1694, H = 748;
const fx = f => 430.4 + Math.log10(f / 100) * 564.6;
const ly = l => 651.3 - l * 5.7;

const bands = document.getElementById('bands');
[['', 16, 20, '#fda3cf'], ['Sub bass', 20, 60, '#fd9f9f'], ['Bass', 60, 250, '#f8df9c'], ['Low mid', 250, 500, '#d4ea9c'], ['Mid', 500, 2000, '#9fe2a4'], ['Upper mid', 2000, 4000, '#a0dcd4'], ['Presence', 4000, 6000, '#9fb0dc'], ['Brilliance', 6000, 20000, '#b09dc4']].forEach(([name, a, b, c]) => {
  const s = document.createElement('span');
  s.textContent = name;
  s.style.width = ((Math.min(fx(b), W) - Math.max(fx(a), 0)) / W * 100).toFixed(2) + '%';
  s.style.flexBasis = 'auto';
  s.style.backgroundColor = c;
  bands.append(s);
});

const plot = document.getElementById('plot');
const half = v => Math.floor(v) + 0.5;
let minor = '', major = '', decade = '';
for (let l = -17; l <= 114; l++) {
  const seg = `M0 ${half(ly(l))}H${W}`;
  if (l % 10) minor += seg; else major += seg;
}
for (const dec of [10, 100, 1000, 10000]) for (let k = 1; k < 10; k++) {
  const f = dec * k;
  if (f < 20 || f > 17300) continue;
  const seg = `M${half(fx(f))} 0V${H}`;
  if (k === 1) decade += seg; else major += seg;
}
for (let f = 11000; f <= 17000; f += 1000) minor += `M${half(fx(f))} 0V${H}`;
el(plot, 'path', { class: 'grid g-minor', d: minor });
el(plot, 'path', { class: 'grid g-major', d: major });
el(plot, 'path', { class: 'grid g-decade', d: decade });

// room mode bars: colour key and position
const C = { r: '#9a1418', g: '#1c6a1c', y: '#ac8a1c', b: '#0c0c8c', p: '#9a149a', c: '#18a4ac', e: '#828282' };
const TOP = { r: 677, g: 686, b: 697, y: 708, p: 708, c: 708, e: 720 };
'r167 g222 y283 r337 b347 p373 y378 c385 g392 e404 y410 p427 r437 e449 y453 c458 e468 p485 g492 y501 e497 r507 b517 y520 c525 c529 e533 p538 p543 y548 c555 e547 e551 e560 r562 g562 y566 p569 e573 e576 y580 c583 y586 c590 p597 e593 e597'.split(' ').forEach(t => {
  const k = t[0], x = +t.slice(1) - 2;
  el(plot, 'rect', { x: x + 0.5, y: TOP[k] + 0.5, width: 4, height: H - TOP[k], fill: C[k], stroke: '#333', 'stroke-width': 0.6 });
});

el(plot, 'path', { class: 'grid g-cursor', d: `M0 ${half(ly(80))}H${W}M2.500 0V${H}` });
const shift = p => p.map((v, i) => i % 2 ? v - 177 : v - 205);
el(plot, 'path', { class: 'cal', d: smooth(shift([205, 550, 241, 547, 300, 544, 350, 543, 420, 542, 500, 543, 560, 543, 635, 545, 700, 546, 749, 547, 1000, 550, 1300, 549, 1450, 547, 1539, 544, 1617, 541, 1691, 541, 1752, 546, 1825, 554, 1900, 562])) });
el(plot, 'path', { class: 'trace', d: smooth(shift([215.7, 400.7, 230, 397, 248, 396, 257, 391.7, 267.5, 385.3, 281, 382.7, 292.5, 384.3, 305, 391.7, 317.5, 392.7, 328, 396.7, 339, 399.3, 347, 403, 353, 396.7, 362, 384.3, 374.6, 384, 382, 371.7, 390.7, 358.7, 398, 363.3, 408.6, 380.7, 415.7, 387.3, 426.4, 378.3, 437, 361.7, 446, 352.7, 453, 350.3, 460, 353.3, 464.6, 365, 468, 377, 471, 366.7, 476.4, 346, 481, 342.3, 489, 345.7, 500, 354.3, 505.7, 350, 510.7, 345.7, 514, 350, 520.4, 363.7, 524.6, 350, 528, 335, 532, 330.7, 536, 336.7, 542.5, 352, 548, 356.3, 554, 350, 559.6, 346.3, 565.7, 350.7, 576, 361.7, 583.6, 352.7, 589.6, 350.7, 599.6, 356, 610, 372.3, 614.6, 375.3, 619, 365, 623.6, 359, 626.4, 362.7, 629, 383.3, 635.4, 430, 641.4, 433.7, 646.8, 448.3, 651.4, 430, 656.8, 416, 662, 414.7, 668, 420, 676.4, 446.7, 684.6, 460, 690, 479.3, 693, 466.7, 698, 441.7, 703, 432.7, 706.8, 435, 714.6, 488.3, 719, 489.7, 729, 492.7, 733.6, 513.3, 740, 544, 750, 556])) });

const tick = (id, side, pct, text, cls) => {
  const s = document.createElement('span');
  s.textContent = text;
  if (cls) s.className = cls;
  s.style[side] = pct.toFixed(2) + '%';
  document.getElementById(id).append(s);
};
for (let l = 110; l >= -10; l -= 5) {
  if (l !== 80) tick('y-axis', 'top', ly(l) / H * 100, l, l % 10 ? 'minor' : '');
}
tick('y-axis', 'top', ly(80) / H * 100, '80,0', 'mark');
tick('x-axis', 'left', 0.1, '17,47', 'mark');
for (const dec of [10, 100, 1000, 10000]) for (let k = 1; k < 10; k++) {
  const f = dec * k;
  if (f >= 20 && f <= 10000) tick('x-axis', 'left', fx(f) / W * 100, f >= 1000 ? f / 1000 + 'k' : f);
}
tick('x-axis', 'left', fx(12000) / W * 100, '12k', 'minor');
tick('x-axis', 'left', fx(14000) / W * 100, '14k', 'minor');
tick('x-axis', 'left', 99.76, '17,4kHz');

// measurement cards; every trace is a list of x, y and spread in a 92 x 60 box
const ENV = {
  front: [0, 16, 1, 4, 17, 2, 10, 22, 2, 12, 29, 2, 15, 13, 2, 20, 14, 2, 24, 28, 6, 28, 38, 12, 40, 34, 12, 55, 34, 8, 75, 34, 5, 84, 36, 4, 91, 42, 3],
  center: [0, 18, 1, 6, 20, 2, 11, 28, 3, 14, 19, 3, 24, 20, 6, 40, 22, 12, 55, 26, 11, 75, 24, 7, 91, 32, 4],
  rear: [0, 24, 2, 7, 26, 2, 12, 15, 3, 18, 20, 5, 25, 26, 10, 45, 24, 10, 60, 26, 7, 74, 26, 9, 84, 36, 4, 90, 40, 4, 91, 48, 2]
};
const noisy = (env, seed) => {
  const r = noise(seed);
  let d = '', i = 0;
  for (let x = 0; x <= 91; x += 0.7) {
    while (i + 3 < env.length - 3 && env[i + 3] < x) i += 3;
    const t = Math.min(1, (x - env[i]) / (env[i + 3] - env[i]));
    const y = env[i + 1] + (env[i + 4] - env[i + 1]) * t, s = env[i + 2] + (env[i + 5] - env[i + 2]) * t;
    d += `${d ? 'L' : 'M'}${(x + 1).toFixed(1)} ${(y + (r() - 0.5) * 2 * s).toFixed(1)}`;
  }
  return d;
};
const sub = smooth([1, 24, 6, 22, 18, 25, 22, 20, 27, 18, 29, 20, 34, 15, 36, 20, 39, 16, 42, 16, 44, 18, 47, 12, 50, 16, 54, 15, 58, 18, 62, 17, 64, 36, 66, 40, 69, 30, 71, 34, 73, 40, 76, 32, 78, 42, 80, 44, 82, 51]);
const cards = [
  ['1', 'bal első dec. 8', '#0c6a3c', noisy(ENV.front, 11), '20,0k'],
  ['2', 'jobb első dec. 8', '#4a44c4', noisy(ENV.front, 77), '20,0k'],
  ['3', 'center dec. 8', '#f4781c', noisy(ENV.center, 42), '20,0k'],
  ['4', 'sub dec. 8', '#d23c46', sub, '200', 'open'],
  ['5', 'bal hátsó dec. 8', '#14b4ac', noisy(ENV.rear, 5), '20,0k'],
  ['6', 'jobb hátsó dec. 8', '#9c6ce4', noisy(ENV.rear, 93), '20,0k']
];
document.getElementById('cards').innerHTML = cards.map(([n, name, color, d, end, cls = '']) => `
  <div class="card ${cls}">
    <svg class="card-shape" width="138" height="215"><path d="M.5 214.500V28.500H76L104 .5H137.500V214.500z"/></svg>
    <div class="card-in">
      <div class="thumb">
        <svg width="92" height="60"><path d="${d}" fill="none" stroke="${color}" stroke-width="1.200"/></svg>
        <div class="thumb-top"><u>${n}</u><span>${name}</span></div>
        <div class="thumb-bot"><span>20</span><span>${end}</span></div>
      </div>
      <div class="card-icons">
        <svg width="16" height="16"><use href="#i-close"/></svg>
        <svg width="16" height="16"><use href="#i-save"/></svg>
        <svg class="paint" width="16" height="20"><use href="#i-brush"/><path d="M1 17h14" stroke="${color}" stroke-width="2"/></svg>
        <svg width="14" height="16"><use href="#i-note"/></svg>
      </div>
    </div>
    <textarea class="memo" aria-label="Notes for ${name}"></textarea>
    <button class="calbtn" type="button">Change Cal...</button>
  </div>`).join('');

// input spectrum, 0 to -60 dB over 86 units
const meter = document.getElementById('meter');
const L = 30, T = 8;
el(meter, 'rect', { x: L, y: T, width: 152, height: 86, fill: '#000' });
const r = noise(31);
let area = `M${L} ${T + 86}`, peaks = '';
for (let x = 0; x < 152; x++) {
  const inBand = x > 65 && x < 118;
  const y = inBand ? 48 + r() * 2 : 55 + r() * 7 + (r() > 0.92 ? 6 : 0) - (x > 34 && x < 38 ? 4 : 0) - (x > 140 ? 4 : 0);
  area += `L${L + x} ${(T + y).toFixed(1)}H${L + x + 1}`;
  const py = inBand ? 36 + r() * 5 : 50 + r() * 8 - (x > 140 ? 3 : 0);
  peaks += `M${L + x} ${(T + py).toFixed(1)}h1`;
}
el(meter, 'path', { d: area + `V${T + 86}z`, fill: 'url(#g-spec)' });
el(meter, 'path', { d: peaks, stroke: '#c02020', 'stroke-width': 1 });
for (let i = 0; i <= 6; i++) {
  const y = Math.round(T + i * 14.33);
  if (i > 0 && i < 5) el(meter, 'path', { d: `M${L} ${y + 0.5}h${i < 4 ? 152 : 6}`, stroke: '#888' });
  el(meter, 'text', { x: 17, y: y + 3 }, i ? -10 * i : 0);
  el(meter, 'path', { d: `M20 ${y + 0.5}h7`, stroke: '#eee' });
  if (i < 6) el(meter, 'path', { d: `M23 ${y + 7.500}h4`, stroke: '#bbb' });
}
```
